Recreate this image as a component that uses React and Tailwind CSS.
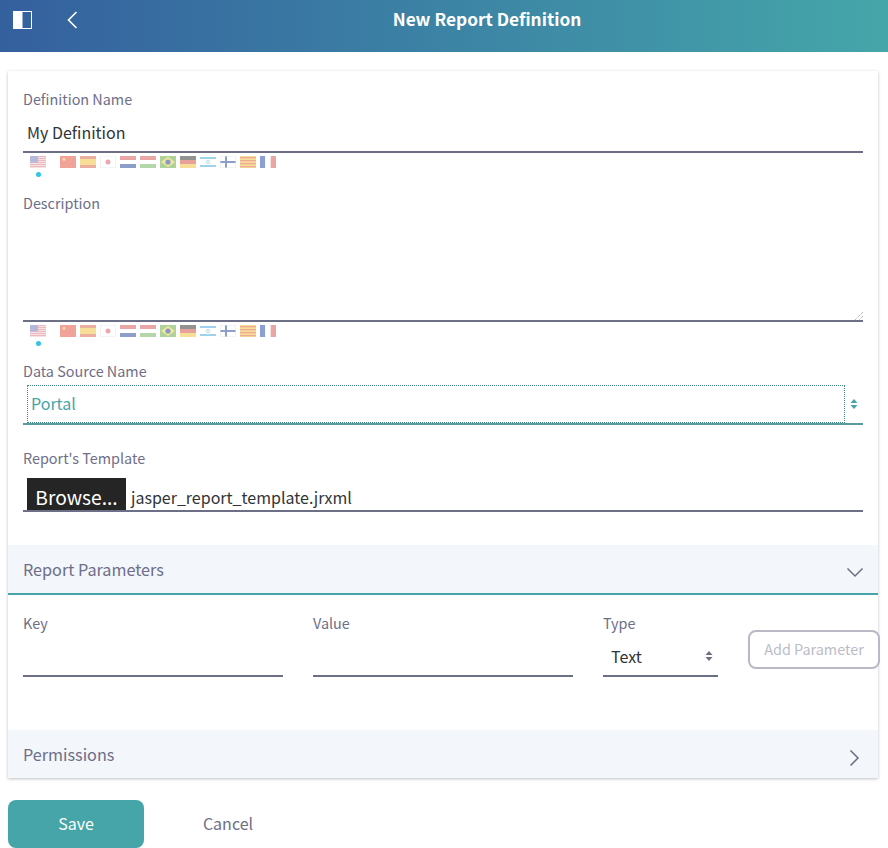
import React from "react";

const Flag = ({ children, border = false }) => (
  <svg width="16" height="12" viewBox="0 0 16 12" className="block shrink-0 opacity-80">
    {children}
    {border && <rect x="0.25" y="0.25" width="15.5" height="11.5" fill="none" stroke="#dfe6ea" strokeWidth="0.5" />}
  </svg>
);

const US = () => (
  <Flag>
    <rect width="16" height="12" fill="#f3d9dc" />
    {[0, 2, 4, 6, 8, 10].map((y) => (
      <rect key={y} y={y} width="16" height="1" fill="#e8a8ae" />
    ))}
    <rect width="8" height="6.5" fill="#a3a7d2" />
  </Flag>
);

const flags = [
  <Flag key="cn">
    <rect width="16" height="12" fill="#ee8b80" />
    <circle cx="4" cy="3.5" r="1.4" fill="#f7d98a" />
  </Flag>,
  <Flag key="es">
    <rect width="16" height="12" fill="#e89a86" />
    <rect y="3" width="16" height="6" fill="#f6d67c" />
  </Flag>,
  <Flag key="jp" border>
    <rect width="16" height="12" fill="#fff" />
    <circle cx="8" cy="6" r="2.5" fill="#e8939a" />
  </Flag>,
  <Flag key="nl">
    <rect width="16" height="4" fill="#e58f8f" />
    <rect y="4" width="16" height="4" fill="#fff" />
    <rect y="8" width="16" height="4" fill="#7186bd" />
  </Flag>,
  <Flag key="hu">
    <rect width="16" height="4" fill="#e58f8f" />
    <rect y="4" width="16" height="4" fill="#fff" />
    <rect y="8" width="16" height="4" fill="#a3cc96" />
  </Flag>,
  <Flag key="br">
    <rect width="16" height="12" fill="#9cc77f" />
    <polygon points="8,1 15,6 8,11 1,6" fill="#efe08a" />
    <circle cx="8" cy="6" r="2.6" fill="#7180b5" />
  </Flag>,
  <Flag key="de">
    <rect width="16" height="4" fill="#777777" />
    <rect y="4" width="16" height="4" fill="#e08a80" />
    <rect y="8" width="16" height="4" fill="#f6d67c" />
  </Flag>,
  <Flag key="il">
    <rect width="16" height="12" fill="#fff" />
    <rect y="1" width="16" height="2" fill="#88c8e8" />
    <rect y="9" width="16" height="2" fill="#88c8e8" />
    <circle cx="8" cy="6" r="1.6" fill="none" stroke="#88c8e8" strokeWidth="0.8" />
  </Flag>,
  <Flag key="fi" border>
    <rect width="16" height="12" fill="#fff" />
    <rect y="5" width="16" height="2" fill="#7186bd" />
    <rect x="5" width="2" height="12" fill="#7186bd" />
  </Flag>,
  <Flag key="ca">
    <rect width="16" height="12" fill="#f6d67c" />
    {[1, 4, 7, 10].map((y) => (
      <rect key={y} y={y} width="16" height="1.3" fill="#e9967a" />
    ))}
  </Flag>,
  <Flag key="fr">
    <rect width="5.3" height="12" fill="#6f88c8" />
    <rect x="5.3" width="5.4" height="12" fill="#fff" />
    <rect x="10.7" width="5.3" height="12" fill="#e58f8f" />
  </Flag>,
];

const FlagRow = () => (
  <div className="flex h-[28px] pl-[7px] pt-[3px]">
    <div className="flex flex-col items-center w-[16px] mr-[14px]">
      <US />
      <span className="mt-[4px] w-[5px] h-[5px] rounded-full bg-[#2fc5e3]" />
    </div>
    <div className="flex gap-[4px] h-[12px]">{flags}</div>
  </div>
);

const Label = ({ children }) => (
  <div className="text-[14.4px] leading-[20px] text-[#6e6e88]">{children}</div>
);

const SortArrows = ({ color }) => (
  <svg width="8" height="12" viewBox="0 0 8 12" className="block">
    <polygon points="4,1 7.5,5 0.5,5" fill={color} />
    <polygon points="4,11 7.5,7 0.5,7" fill={color} />
  </svg>
);

const App = () => {
  return (
    <div className="w-[888px] h-[848px] overflow-hidden bg-white font-['Noto_Sans_CJK_JP','Noto_Sans',sans-serif]">
      <header className="relative h-[52px] bg-gradient-to-r from-[#35609e] to-[#45a6a9] flex items-start justify-center pl-[86px]">
        <svg width="20" height="19" viewBox="0 0 20 19" className="absolute left-[13px] top-[11px]">
          <rect x="0.5" y="0.5" width="18" height="17" fill="none" stroke="#fff" />
          <rect x="0.5" y="0.5" width="9" height="17" fill="#fff" />
        </svg>
        <svg width="12" height="18" viewBox="0 0 12 18" className="absolute left-[66px] top-[11px]">
          <path d="M10.5 1 L2.5 9 L10.5 17" fill="none" stroke="#fff" strokeWidth="1.6" />
        </svg>
        <h1 className="text-[17.28px] leading-[38px] font-bold text-white">New Report Definition</h1>
      </header>

      <main className="px-[8px]">
        <section className="mt-[19px] w-[870px] h-[707px] bg-white shadow-[0_1px_3px_rgba(0,0,0,0.25)] flex flex-col">
          <div className="px-[15px] pt-[18px]">
            <Label>Definition Name</Label>
            <div className="mt-[10px] h-[34px] border-b-2 border-[#6c6f86] pl-[4px] text-[16px] leading-[26px] text-[#2f3437]">
              My Definition
            </div>
            <FlagRow />
            <div className="mt-[12px]">
              <Label>Description</Label>
            </div>
            <div className="relative h-[109px] border-b-2 border-[#6c6f86]">
              <svg width="9" height="9" viewBox="0 0 9 9" className="absolute right-0 bottom-0">
                <path d="M9 1 L1 9 M9 5 L5 9" stroke="#999999" strokeWidth="1" strokeDasharray="1 1" />
              </svg>
            </div>
            <FlagRow />
            <div className="mt-[11px]">
              <Label>Data Source Name</Label>
            </div>
            <div className="relative h-[40px] mt-[4px] border-b-2 border-[#5b9b9e]">
              <div className="ml-[4px] w-[818px] h-[38px] border border-dotted border-[#3f8a8e] pl-[3px] text-[16px] leading-[34px] text-[#45a5a8]">
                Portal
              </div>
              <span className="absolute right-[5px] top-[13px]">
                <SortArrows color="#45a5a8" />
              </span>
            </div>
            <div className="mt-[23px]">
              <Label>Report's Template</Label>
            </div>
            <div className="mt-[10px] h-[34px] border-b-2 border-[#6c6f86] pl-[4px] flex items-start">
              <div className="h-[32px] w-[99px] bg-[#252525] text-white text-[19.2px] leading-[38px] text-center overflow-hidden">
                Browse...
              </div>
              <span className="ml-[5px] text-[16px] leading-[38px] h-[32px] text-[#2f3437]">jasper_report_template.jrxml</span>
            </div>
          </div>

          <div className="mt-[33px] h-[50px] bg-[#f3f6fa] border-b-2 border-[#45a5a8] px-[15px] flex items-center justify-between">
            <span className="text-[16.2px] text-[#6e6e88]">Report Parameters</span>
            <svg width="18" height="11" viewBox="0 0 18 11" className="-mr-[1px] mt-[6px]">
              <path d="M1.5 1.5 L9 9 L16.5 1.5" fill="none" stroke="#6e6e80" strokeWidth="1.5" />
            </svg>
          </div>

          <div className="h-[135px] pl-[15px] pt-[18px] flex items-start">
            <div className="w-[260px] shrink-0 mr-[30px]">
              <Label>Key</Label>
              <div className="mt-[13px] h-[31px] border-b-2 border-[#6c6f86]" />
            </div>
            <div className="w-[260px] shrink-0 mr-[30px]">
              <Label>Value</Label>
              <div className="mt-[13px] h-[31px] border-b-2 border-[#6c6f86]" />
            </div>
            <div className="w-[115px] shrink-0 mr-[30px]">
              <Label>Type</Label>
              <div className="mt-[13px] h-[31px] border-b-2 border-[#6c6f86] pl-[8px] pr-[5px] flex items-start justify-between text-[16px] leading-[20px] text-[#2f3437]">
                Text
                <span className="mt-[4px]">
                  <SortArrows color="#6e6e80" />
                </span>
              </div>
            </div>
            <button className="mt-[17px] w-[132px] h-[39px] pb-[2px] shrink-0 border-2 border-[#b9b9c6] rounded-[8px] bg-white text-[14.4px] leading-[32px] text-[#bcbcc8]">
              Add Parameter
            </button>
          </div>

          <div className="h-[48px] bg-[#f3f6fa] px-[15px] flex items-center justify-between">
            <span className="text-[16.2px] text-[#6e6e88]">Permissions</span>
            <svg width="11" height="18" viewBox="0 0 11 18" className="mr-[3px] mt-[8px]">
              <path d="M1.5 1.5 L9 9 L1.5 16.5" fill="none" stroke="#6e6e80" strokeWidth="1.5" />
            </svg>
          </div>
        </section>

        <div className="mt-[22px] flex items-center">
          <button className="w-[136px] h-[48px] pb-[2px] rounded-[8px] bg-[#45a5a8] text-white text-[16px]">Save</button>
          <button className="w-[168px] h-[48px] pb-[2px] text-[16px] text-[#6e6e88]">Cancel</button>
        </div>
      </main>
    </div>
  );
};

export default App;
